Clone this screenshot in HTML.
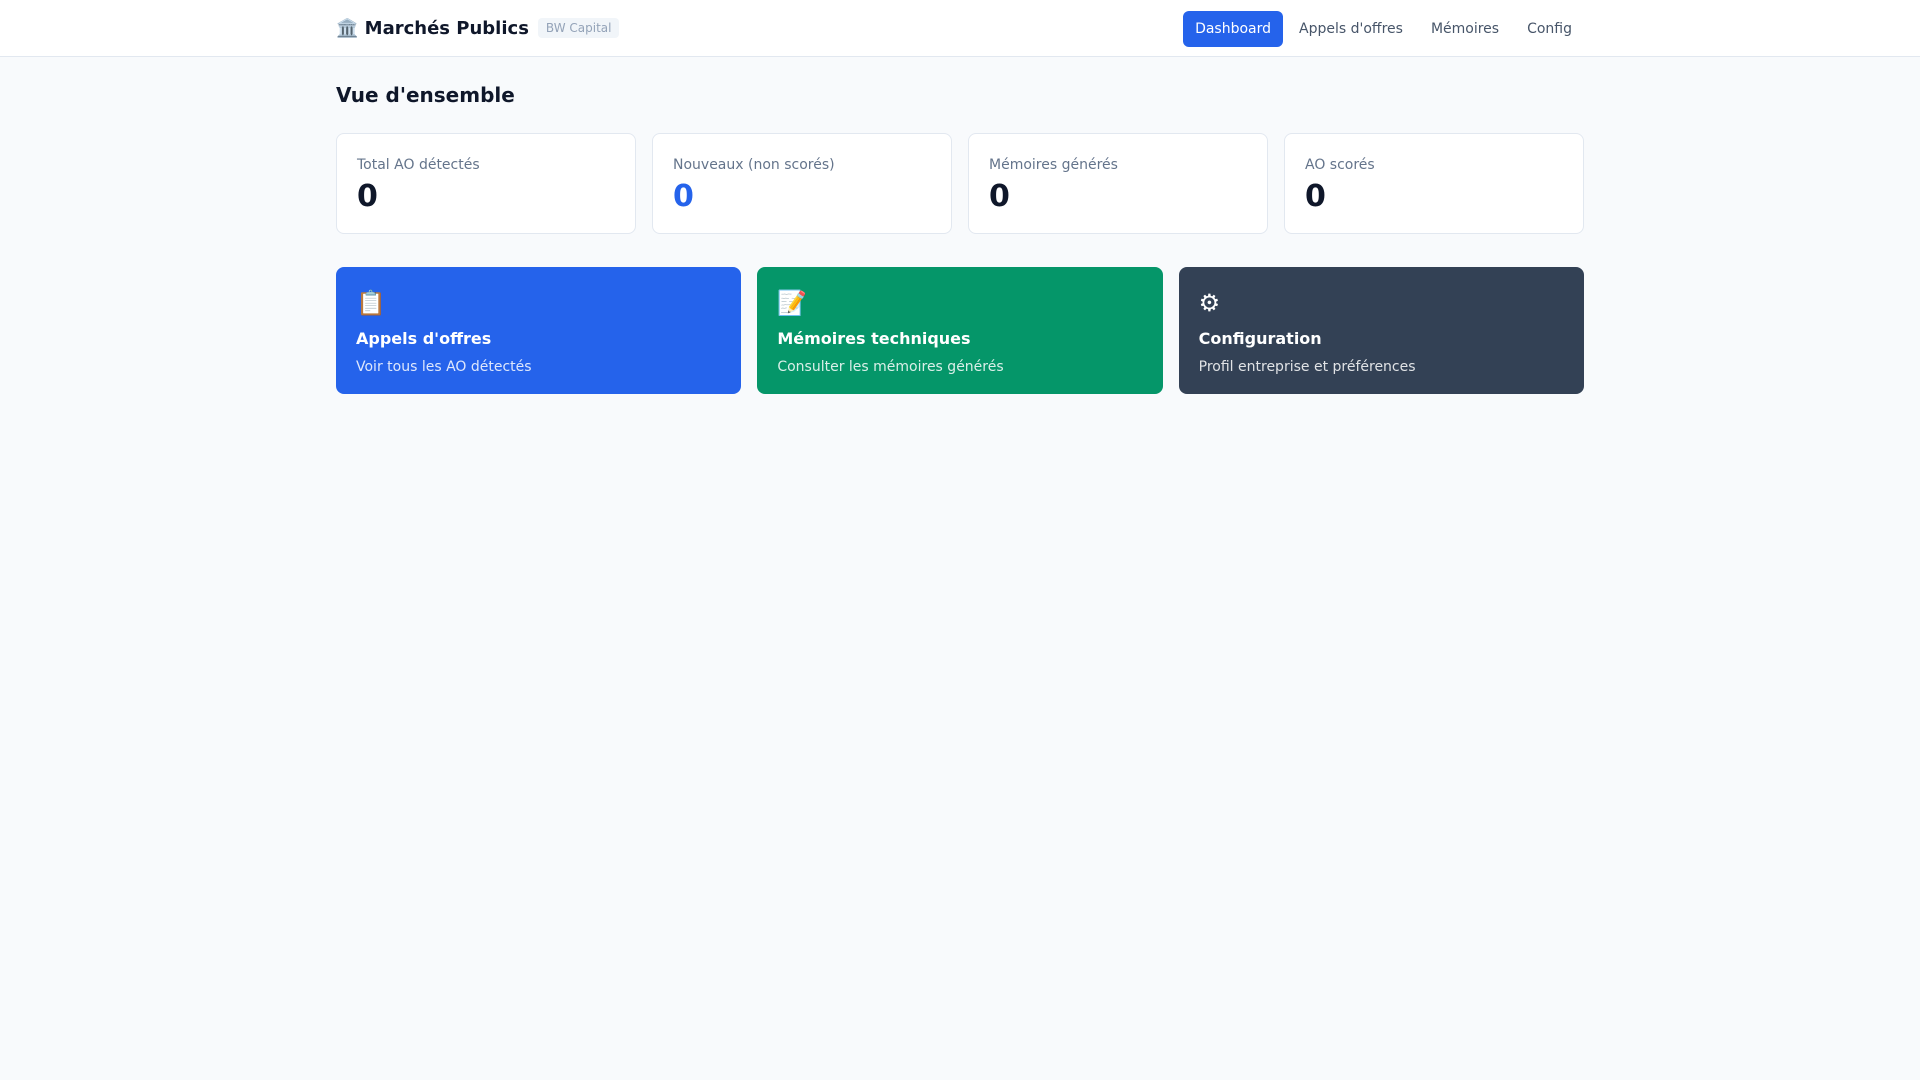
<!DOCTYPE html>
<html><head><meta charset="utf-8"><style>
*{box-sizing:border-box;margin:0;padding:0}
body{background:#f8fafc;font-family:"DejaVu Sans","Liberation Sans","Noto Sans CJK JP",sans-serif;color:#0f172a;width:1920px;height:1080px}
header{background:#fff;border-bottom:1px solid #e2e8f0;height:57px}
.wrap{max-width:1280px;margin:0 auto;padding:0 16px}
.hd{display:flex;align-items:center;justify-content:space-between;height:56px}
.logo{display:flex;align-items:center;font-size:18px;font-weight:bold;margin-top:0}
.badge{font-size:12px;font-weight:normal;color:#94a3b8;background:#f1f5f9;padding:3px 8px;border-radius:4px;margin-left:9px}
nav{display:flex;gap:4px;margin-top:1px}
nav a{font-size:14px;color:#475569;padding:10px 12px;border-radius:6px;text-decoration:none}
nav a.on{background:#2563eb;color:#fff}
h2{font-size:20px;font-weight:bold;margin:26px 0 26px}
.stats{display:grid;grid-template-columns:repeat(4,1fr);gap:16px}
.st{background:#fff;border:1px solid #e2e8f0;border-radius:8px;padding:23px 20px 0;height:101px}
.st .l{font-size:14px;color:#64748b}
.st .n{font-size:30px;font-weight:bold;margin-top:6px}
.acts{display:grid;grid-template-columns:repeat(3,1fr);gap:16px;margin-top:33px}
.ac{border-radius:8px;padding:22px 20px 0;color:#fff;height:127px}
.ac .i{font-size:24px;height:36px}
.ac .t{font-size:16px;font-weight:bold;margin-top:4px}
.ac .d{font-size:14px;opacity:.85;margin-top:11px}
</style></head><body>
<header><div class="wrap hd">
<div class="logo">🏛️&nbsp;Marchés Publics<span class="badge">BW Capital</span></div>
<nav><a class="on">Dashboard</a><a>Appels d'offres</a><a>Mémoires</a><a>Config</a></nav>
</div></header>
<div class="wrap">
<h2>Vue d'ensemble</h2>
<div class="stats">
<div class="st"><div class="l">Total AO détectés</div><div class="n">0</div></div>
<div class="st"><div class="l">Nouveaux (non scorés)</div><div class="n" style="color:#2563eb">0</div></div>
<div class="st"><div class="l">Mémoires générés</div><div class="n">0</div></div>
<div class="st"><div class="l">AO scorés</div><div class="n">0</div></div>
</div>
<div class="acts">
<div class="ac" style="background:#2563eb"><div class="i">📋</div><div class="t">Appels d'offres</div><div class="d">Voir tous les AO détectés</div></div>
<div class="ac" style="background:#059669"><div class="i">📝</div><div class="t">Mémoires techniques</div><div class="d">Consulter les mémoires générés</div></div>
<div class="ac" style="background:#334155"><div class="i" style="font-family:'DejaVu Sans',sans-serif">&#x2699;&#xFE0E;</div><div class="t">Configuration</div><div class="d">Profil entreprise et préférences</div></div>
</div>
</div>
</body></html>
